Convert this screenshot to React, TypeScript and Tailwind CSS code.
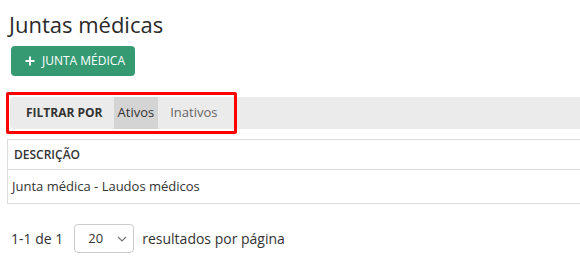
import React from "react";

export default function App() {
  return (
    <div className="w-[580px] h-[271px] overflow-hidden bg-white font-['Open_Sans',sans-serif] text-[#333]">
      <div className="pt-[9px] pl-[9px]">
        <h1 className="text-[22px] leading-[30px] font-normal text-[#2a2a2a]">Juntas médicas</h1>
      </div>
      <div className="pl-[11px] mt-[7px]">
        <button className="h-[30px] w-[124px] rounded-[4px] bg-[#359a72] text-white flex items-center pl-[14px] gap-[7px] text-[12px] font-medium">
          <svg width="10" height="10" viewBox="0 0 10 10">
            <path d="M5 0.5V9.5M0.5 5H9.5" stroke="white" strokeWidth="2" />
          </svg>
          <span>JUNTA MÉDICA</span>
        </button>
      </div>
      <div className="mt-[21px] ml-[10px] h-[32px] bg-[#ebebeb] rounded-l-[4px] flex items-stretch">
        <div className="relative flex items-stretch">
          <div className="absolute -left-[4px] -top-[5px] -right-[4px] -bottom-[5px] border-[3px] border-[#ff0000] rounded-[2px] pointer-events-none" />
          <div className="flex items-center pl-[16px] pr-[11px] text-[12px] font-bold text-[#333]">FILTRAR POR</div>
          <div className="flex items-center px-[4px] bg-[#d4d4d4] text-[13px] text-[#333]">Ativos</div>
          <div className="flex items-center pl-[12px] pr-[16px] text-[13px] text-[#666]">Inativos</div>
        </div>
      </div>
      <div className="mt-[10px] ml-[7px] w-[600px] border-l border-t border-b border-[#dddddd]">
        <div className="h-[30px] flex items-center pl-[6px] text-[12px] font-semibold text-[#333] border-b border-[#dddddd]">DESCRIÇÃO</div>
        <div className="h-[33px] flex items-center pl-[4px] text-[13px] text-[#333]">Junta médica - Laudos médicos</div>
      </div>
      <div className="mt-[20px] pl-[11px] flex items-center text-[14px] text-[#333]">
        <span>1-1 de 1</span>
        <div className="ml-[11px] h-[29px] w-[60px] border border-[#cccccc] rounded-[4px] flex items-center pl-[13px] text-[13px]">
          <span>20</span>
          <svg className="ml-[14px]" width="10" height="6" viewBox="0 0 10 6">
            <path d="M1 1L5 5L9 1" stroke="#777" strokeWidth="1.2" fill="none" />
          </svg>
        </div>
        <span className="ml-[8px]">resultados por página</span>
      </div>
    </div>
  );
}
